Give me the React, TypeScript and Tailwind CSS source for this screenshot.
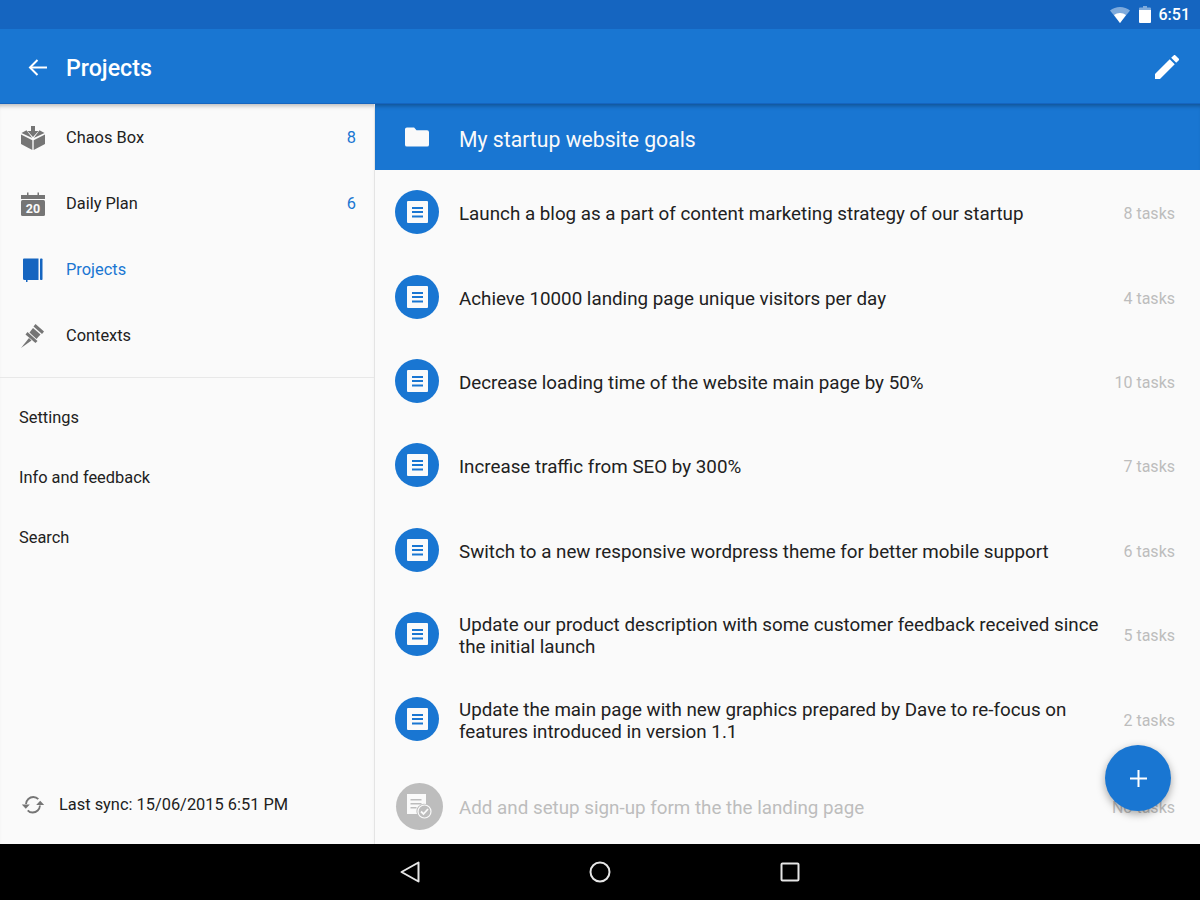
import React from 'react';

const font = { fontFamily: 'Roboto, sans-serif' };

const goals = [
    { title: 'Launch a blog as a part of content marketing strategy of our startup', tasks: '8 tasks' },
    { title: 'Achieve 10000 landing page unique visitors per day', tasks: '4 tasks' },
    { title: 'Decrease loading time of the website main page by 50%', tasks: '10 tasks' },
    { title: 'Increase traffic from SEO by 300%', tasks: '7 tasks' },
    { title: 'Switch to a new responsive wordpress theme for better mobile support', tasks: '6 tasks' },
    { title: 'Update our product description with some customer feedback received since the initial launch', tasks: '5 tasks' },
    { title: 'Update the main page with new graphics prepared by Dave to re-focus on features introduced in version 1.1', tasks: '2 tasks' },
];

const BoxIcon = () => (
    <svg width="24" height="24" viewBox="0 0 24 24" fill="#757575">
        <path d="M10 0h4v5h3.500L12 11 6.500 5H10z" />
        <path d="M0.500 7l5-2.800 5.700 7.800z" />
        <path d="M23.500 7l-5-2.800-5.700 7.800z" />
        <path d="M0 8.500l11.300 5.700V24L0 18z" />
        <path d="M24 8.500l-11.300 5.700V24L24 18z" />
    </svg>
);

const CalendarIcon = () => (
    <svg width="24" height="24" viewBox="0 0 24 24">
        <path fill="#757575" d="M0 3h6V0.500h1.500V3h9V0.500H18V3h6v4H0z" />
        <rect x="0" y="8" width="24" height="16" rx="1.500" fill="#757575" />
        <text x="12" y="20.500" textAnchor="middle" fontSize="12.500" fontWeight="700" fill="#fafafa" fontFamily="Roboto, sans-serif">20</text>
    </svg>
);

const NotebookIcon = () => (
    <svg width="24" height="24" viewBox="0 0 24 24" fill="#1565c0">
        <path d="M3 0.500h14.500v21.500H3.500A1.500 1.500 0 0 1 2 20.500V1.500A1 1 0 0 1 3 0.500z" />
        <rect x="19" y="0.500" width="2.500" height="21.500" rx="0.800" />
        <rect x="5" y="22" width="1.500" height="2" />
    </svg>
);

const PinIcon = () => (
    <svg width="24" height="24" viewBox="0 0 24 24" fill="#757575">
        <path d="M14.500 0l8.500 7.500-2 2.500-8.500-7.500z" />
        <path d="M12 4l7.500 6.500-4 4.500-7-6.500z" />
        <path d="M6.500 8l10 9-2 2-10-8.500z" />
        <path d="M8 14l2.500 2.500L0 24z" />
    </svg>
);

const SyncIcon = () => (
    <svg width="24" height="20" viewBox="0 0 24 20" fill="none" stroke="#757575" strokeWidth="1.800">
        <path d="M5 9c0.300-4 3.400-7 7.300-7 2 0 3.800 0.800 5 2.200" />
        <path d="M19 10.500c-0.300 4-3.400 7-7.300 7-2 0-3.800-0.800-5-2.200" />
        <path fill="#757575" stroke="none" d="M0.800 9.500h8L4.800 13.700z" />
        <path fill="#757575" stroke="none" d="M15.200 10h8l-4-4.300z" />
    </svg>
);

const DocBadge = () => (
    <div className="flex h-11 w-11 shrink-0 items-center justify-center rounded-full bg-[#1976d2]">
        <svg width="21" height="22" viewBox="0 0 21 22">
            <rect x="0" y="0" width="21" height="22" rx="1" fill="#fafafa" />
            <rect x="5" y="6" width="11" height="2" fill="#1976d2" />
            <rect x="5" y="10" width="11" height="2" fill="#1976d2" />
            <rect x="5" y="14.500" width="11" height="2" fill="#1976d2" />
        </svg>
    </div>
);

const DoneBadge = () => (
    <div className="flex h-[47px] w-[47px] shrink-0 items-center justify-center rounded-full bg-[#bdbdbd]">
        <svg width="25" height="25" viewBox="0 0 25 25">
            <path d="M0 0h19v10a7.500 7.500 0 0 0-9 10H0z" fill="#fafafa" />
            <rect x="3.500" y="5" width="11" height="1.500" fill="#bdbdbd" />
            <rect x="3.500" y="9" width="11" height="1.500" fill="#bdbdbd" />
            <rect x="3.500" y="13" width="6" height="1.500" fill="#bdbdbd" />
            <circle cx="17.500" cy="17.500" r="6.500" fill="#bdbdbd" stroke="#fafafa" strokeWidth="1.200" />
            <path d="M14 17.500l2.500 2.500 4.500-5" fill="none" stroke="#fafafa" strokeWidth="1.800" />
        </svg>
    </div>
);

const NavRow = ({
    icon,
    label,
    count,
    active,
}: {
    icon: React.ReactNode;
    label: string;
    count?: number;
    active?: boolean;
}) => (
    <div className="flex h-[66px] items-center pl-[21px] pr-[18px]">
        <div className="flex w-[45px] shrink-0">{icon}</div>
        <span className={`flex-1 text-[16.4px] ${active ? 'text-[#1976d2]' : 'text-[#212121]'}`}>{label}</span>
        {count !== undefined && <span className="text-[16.4px] text-[#1976d2]">{count}</span>}
    </div>
);

const GoalRow = ({ title, tasks }: { title: string; tasks: string }) => (
    <div className="flex h-[84.4px] shrink-0 items-center pl-5 pr-[25px]">
        <DocBadge />
        <div className="ml-5 flex-1 pr-4 pt-1 text-[18.8px] leading-[22px] text-[#212121]">{title}</div>
        <div className="shrink-0 pt-1 text-base text-[#bdbdbd]">{tasks}</div>
    </div>
);

export default function App() {
    return (
        <div className="flex h-[900px] w-[1200px] flex-col overflow-hidden bg-[#fafafa]" style={font}>
            <div className="flex h-[29px] shrink-0 items-center justify-end bg-[#1565c0] pr-[10px]">
                <svg width="20" height="16" viewBox="0 0 20 16" className="mr-[9px]">
                    <path d="M0 3.500C2.800 1.300 6.200 0 10 0s7.200 1.300 10 3.500L10 16z" fill="#fff" fillOpacity="0.450" />
                    <path d="M4 8C5.700 6.700 7.800 6 10 6s4.300 0.700 6 2L10 16z" fill="#fff" />
                </svg>
                <svg width="12" height="17" viewBox="0 0 12 17" className="mr-[8px]">
                    <path d="M4 0h4v1.500h3a1 1 0 0 1 1 1V4H0V2.500a1 1 0 0 1 1-1h3z" fill="#fff" fillOpacity="0.450" />
                    <path d="M0 4h12v12a1 1 0 0 1-1 1H1a1 1 0 0 1-1-1z" fill="#fff" />
                </svg>
                <span className="text-base font-medium text-white">6:51</span>
            </div>

            <div className="z-10 flex h-[75px] shrink-0 items-center border-b border-[#1565c0] bg-[#1976d2] pl-[28px] pr-[21px]">
                <svg width="19" height="17" viewBox="0 0 19 17" fill="none" stroke="#fff" strokeWidth="2" className="mr-[19px] mt-[2px]">
                    <path d="M19 8.500H2" />
                    <path d="M9.500 1L2 8.500 9.500 16" />
                </svg>
                <span className="flex-1 pt-1 text-[23.2px] font-medium text-white">Projects</span>
                <svg width="24" height="24" viewBox="3 3 18 18" fill="#fff" className="mt-[2px]">
                    <path d="M3 17.250V21h3.750L17.810 9.940l-3.750-3.750L3 17.250zM20.710 7.040a1 1 0 0 0 0-1.410l-2.340-2.340a1 1 0 0 0-1.410 0l-1.830 1.830 3.750 3.750 1.830-1.830z" />
                </svg>
            </div>

            <div className="flex min-h-0 flex-1">
                <div className="flex w-[375px] shrink-0 flex-col border-r border-[#e4e4e4] bg-[#fafafa] shadow-[inset_0_5px_4px_-3px_rgba(0,0,0,0.25)]">
                    <div className="border-b border-[#e8e8e8] pb-2 pt-[1px]">
                        <NavRow icon={<BoxIcon />} label="Chaos Box" count={8} />
                        <NavRow icon={<CalendarIcon />} label="Daily Plan" count={6} />
                        <NavRow icon={<NotebookIcon />} label="Projects" active />
                        <NavRow icon={<PinIcon />} label="Contexts" />
                    </div>
                    <div className="flex flex-col pl-[19px] text-[16.4px] text-[#212121]">
                        <div className="flex h-[60px] items-center pt-[21px]">Settings</div>
                        <div className="flex h-[60px] items-center pt-[21px]">Info and feedback</div>
                        <div className="flex h-[60px] items-center pt-[21px]">Search</div>
                    </div>
                    <div className="mt-auto flex h-[78px] items-center pl-[21px] text-[16.4px] text-[#212121]">
                        <div className="mr-[14px] flex">
                            <SyncIcon />
                        </div>
                        Last sync: 15/06/2015 6:51 PM
                    </div>
                </div>

                <div className="relative flex min-w-0 flex-1 flex-col overflow-hidden">
                    <div className="flex h-[66px] shrink-0 items-center bg-[#1976d2] pl-[30px] shadow-[inset_0_5px_4px_-3px_rgba(0,0,0,0.3)]">
                        <svg width="24" height="20" viewBox="0 0 25 20" fill="#fafafa" className="mr-[30px]">
                            <path d="M2 0h7.500l2.500 3h11a2 2 0 0 1 2 2v13a2 2 0 0 1-2 2H2a2 2 0 0 1-2-2V2a2 2 0 0 1 2-2z" />
                        </svg>
                        <span className="pt-[6px] text-[21.2px] text-[#fafafa]">My startup website goals</span>
                    </div>
                    {goals.map((goal) => (
                        <GoalRow key={goal.title} title={goal.title} tasks={goal.tasks} />
                    ))}
                    <div className="flex h-[84px] shrink-0 items-center pl-[21px] pr-[25px] pt-2">
                        <DoneBadge />
                        <div className="ml-4 flex-1 pt-[2px] text-[18.8px] text-[#bdbdbd]">Add and setup sign-up form the the landing page</div>
                        <div className="shrink-0 pt-[2px] text-base text-[#bdbdbd]">No tasks</div>
                    </div>
                    <button className="absolute left-[730px] top-[641px] flex h-[66px] w-[66px] items-center justify-center rounded-full bg-[#1976d2] shadow-[0_3px_8px_rgba(0,0,0,0.35)]">
                        <svg width="17" height="17" viewBox="0 0 17 17" fill="#fff">
                            <rect x="7.500" y="0" width="2" height="17" />
                            <rect x="0" y="7.500" width="17" height="2" />
                        </svg>
                    </button>
                </div>
            </div>

            <div className="flex h-[56px] shrink-0 items-center bg-black pl-[400px]">
                <svg width="20" height="22" viewBox="0 0 20 22" fill="none" stroke="#e6e6e6" strokeWidth="2" strokeLinejoin="round">
                    <path d="M18.500 1.500v19L1.500 11z" />
                </svg>
                <svg width="22" height="22" viewBox="0 0 22 22" fill="none" stroke="#e6e6e6" strokeWidth="2" className="ml-[169px]">
                    <circle cx="11" cy="11" r="9.500" />
                </svg>
                <svg width="20" height="20" viewBox="0 0 20 20" fill="none" stroke="#e6e6e6" strokeWidth="2" strokeLinejoin="round" className="ml-[169px]">
                    <rect x="1.500" y="1.500" width="17" height="17" rx="1" />
                </svg>
            </div>
        </div>
    );
}
